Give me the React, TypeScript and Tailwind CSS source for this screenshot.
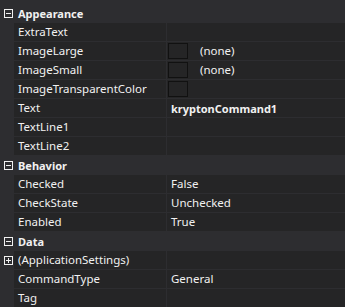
import React from 'react';

type Row =
  | { kind: 'cat'; label: string; open: boolean }
  | { kind: 'prop'; label: string; value?: string; bold?: boolean; swatch?: boolean; expand?: boolean };

const rows: Row[] = [
  { kind: 'cat', label: 'Appearance', open: true },
  { kind: 'prop', label: 'ExtraText' },
  { kind: 'prop', label: 'ImageLarge', value: '(none)', swatch: true },
  { kind: 'prop', label: 'ImageSmall', value: '(none)', swatch: true },
  { kind: 'prop', label: 'ImageTransparentColor', swatch: true },
  { kind: 'prop', label: 'Text', value: 'kryptonCommand1', bold: true },
  { kind: 'prop', label: 'TextLine1' },
  { kind: 'prop', label: 'TextLine2' },
  { kind: 'cat', label: 'Behavior', open: true },
  { kind: 'prop', label: 'Checked', value: 'False' },
  { kind: 'prop', label: 'CheckState', value: 'Unchecked' },
  { kind: 'prop', label: 'Enabled', value: 'True' },
  { kind: 'cat', label: 'Data', open: true },
  { kind: 'prop', label: '(ApplicationSettings)', expand: true },
  { kind: 'prop', label: 'CommandType', value: 'General' },
  { kind: 'prop', label: 'Tag' },
];

function Glyph({ open }: { open: boolean }) {
  return (
    <svg width="9" height="9" viewBox="0 0 9 9" className="block">
      <rect x="0.5" y="0.5" width="8" height="8" fill="none" stroke="#f1f1f1" strokeWidth="1" />
      <line x1="2" y1="4.5" x2="7" y2="4.5" stroke="#f1f1f1" strokeWidth="1" />
      {!open && <line x1="4.5" y1="2" x2="4.5" y2="7" stroke="#f1f1f1" strokeWidth="1" />}
    </svg>
  );
}

export default function App() {
  return (
    <div
      className="w-[345px] h-[307px] overflow-hidden bg-[#2d2d30] pt-[4px] text-[11.5px] text-[#f1f1f1]"
      style={{ fontFamily: '"Noto Sans", "Open Sans", sans-serif' }}
    >
      {rows.map((row, i) =>
        row.kind === 'cat' ? (
          <div key={i} className="flex h-[19px] items-center border-b border-[#2d2d30] bg-[#2d2d30]">
            <div className="flex w-[14px] shrink-0 justify-center pl-[3px]">
              <Glyph open={row.open} />
            </div>
            <span className="pl-[4px] text-[11px] font-bold leading-none">{row.label}</span>
          </div>
        ) : (
          <div key={i} className="flex h-[19px]">
            <div className="flex w-[14px] shrink-0 items-center justify-center pl-[3px]">
              {row.expand && <Glyph open={false} />}
            </div>
            <div className="flex w-[152px] shrink-0 items-center overflow-hidden whitespace-nowrap border-b border-[#2d2d30] bg-[#252526] pl-[4px] leading-none">
              {row.label}
            </div>
            <div className="w-px shrink-0 bg-[#2d2d30]" />
            <div className="flex flex-1 items-center gap-[9px] whitespace-nowrap border-b border-[#2d2d30] bg-[#252526] pl-[1px] leading-none">
              {row.swatch && <div className="h-[16px] w-[20px] shrink-0 border border-[#111111] bg-[#252526]" />}
              {row.value && (
                <span className={row.bold ? 'pl-[3px] text-[11px] font-bold' : 'pl-[3px]'}>{row.value}</span>
              )}
            </div>
          </div>
        )
      )}
    </div>
  );
}
